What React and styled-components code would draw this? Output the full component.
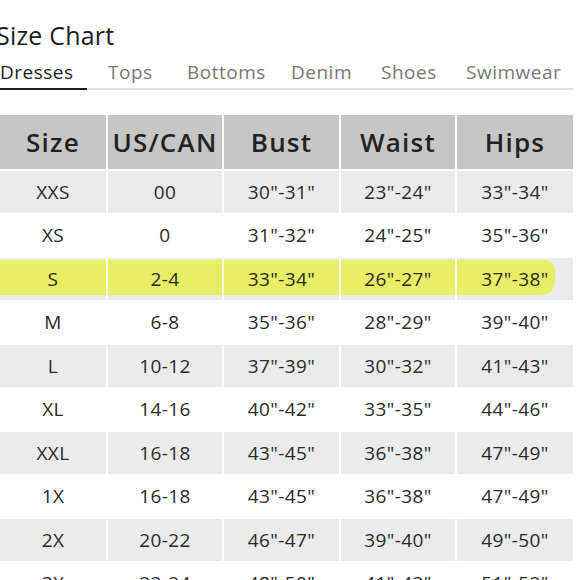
import React from 'react';
import styled, { createGlobalStyle } from 'styled-components';

const GlobalStyle = createGlobalStyle`
  html, body {
    margin: 0;
    padding: 0;
    background: #fff;
    overflow: hidden;
  }
  body {
    font-family: 'Open Sans', Lato, sans-serif;
    color: #222;
  }
`;

const Page = styled.div`
  width: 580px;
  height: 580px;
  overflow: hidden;
  padding-top: 19px;
  box-sizing: border-box;
`;

const Title = styled.h1`
  margin: 0 0 0 -4px;
  font-size: 25px;
  line-height: 32px;
  font-weight: 400;
  color: #1c1c1c;
  letter-spacing: 0.2px;
`;

const Tabs = styled.div`
  display: flex;
  width: 573px;
  margin-top: 8px;
  border-bottom: 2px solid #e3e3e3;
`;

const Tab = styled.div`
  position: relative;
  font-size: 19px;
  line-height: 27px;
  padding-bottom: 2px;
  width: ${(p) => p.w}px;
  color: ${(p) => (p.active ? '#1e1e1e' : '#777')};
  letter-spacing: 0.5px;
  white-space: nowrap;

  &::after {
    content: '';
    display: ${(p) => (p.active ? 'block' : 'none')};
    position: absolute;
    left: 0;
    bottom: -2px;
    width: 87px;
    height: 2px;
    background: #1e1e1e;
  }
`;

const Table = styled.div`
  display: grid;
  grid-template-columns: 106px 114px 115px 114px 116px;
  grid-template-rows: 54px;
  grid-auto-rows: 41.5px;
  column-gap: 2px;
  row-gap: 2px;
  margin-top: 25px;
  width: 573px;
`;

const HeadCell = styled.div`
  background: #c6c6c6;
  display: flex;
  align-items: center;
  justify-content: center;
  font-size: 26px;
  font-weight: 600;
  color: #222;
  letter-spacing: 1.2px;
  white-space: nowrap;
`;

const Cell = styled.div`
  position: relative;
  display: flex;
  align-items: center;
  justify-content: center;
  font-size: 19px;
  color: #2a2a2a;
  letter-spacing: 0.4px;
  background: ${(p) => (p.shaded ? '#ebebeb' : '#fff')};

  &::before {
    content: '';
    display: ${(p) => (p.marked ? 'block' : 'none')};
    position: absolute;
    left: 0;
    right: ${(p) => (p.last ? '18px' : '0')};
    top: 2px;
    bottom: 5px;
    background: #e9ef64;
    border-radius: ${(p) => (p.last ? '0 10px 14px 0' : '0')};
  }
`;

const CellText = styled.span`
  position: relative;
`;

const tabs = [
  { label: 'Dresses', w: 108 },
  { label: 'Tops', w: 79 },
  { label: 'Bottoms', w: 104 },
  { label: 'Denim', w: 90 },
  { label: 'Shoes', w: 85 },
  { label: 'Swimwear', w: 107 },
];

const headers = ['Size', 'US/CAN', 'Bust', 'Waist', 'Hips'];

const rows = [
  ['XXS', '00', '30"-31"', '23"-24"', '33"-34"'],
  ['XS', '0', '31"-32"', '24"-25"', '35"-36"'],
  ['S', '2-4', '33"-34"', '26"-27"', '37"-38"'],
  ['M', '6-8', '35"-36"', '28"-29"', '39"-40"'],
  ['L', '10-12', '37"-39"', '30"-32"', '41"-43"'],
  ['XL', '14-16', '40"-42"', '33"-35"', '44"-46"'],
  ['XXL', '16-18', '43"-45"', '36"-38"', '47"-49"'],
  ['1X', '16-18', '43"-45"', '36"-38"', '47"-49"'],
  ['2X', '20-22', '46"-47"', '39"-40"', '49"-50"'],
  ['3X', '22-24', '48"-50"', '41"-42"', '51"-52"'],
];

export default function App() {
  return (
    <Page>
      <GlobalStyle />
      <Title>Size Chart</Title>
      <Tabs>
        {tabs.map((t, i) => (
          <Tab key={t.label} w={t.w} active={i === 0}>
            {t.label}
          </Tab>
        ))}
      </Tabs>
      <Table>
        {headers.map((h) => (
          <HeadCell key={h}>{h}</HeadCell>
        ))}
        {rows.map((row, r) =>
          row.map((val, c) => (
            <Cell
              key={`${r}-${c}`}
              shaded={r % 2 === 0}
              marked={r === 2}
              last={c === row.length - 1}
            >
              <CellText>{val}</CellText>
            </Cell>
          )),
        )}
      </Table>
    </Page>
  );
}
